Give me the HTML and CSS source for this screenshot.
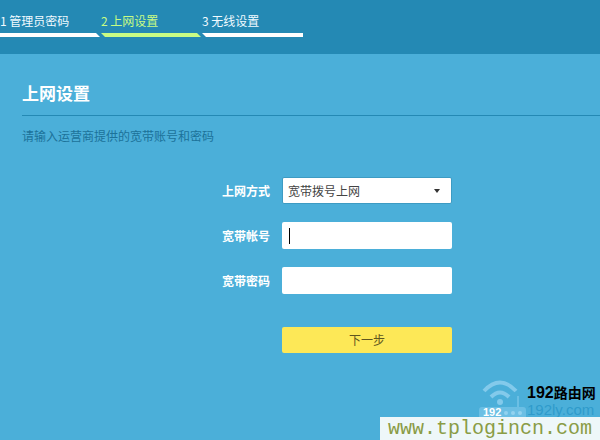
FILE: index.html
```html
<!DOCTYPE html>
<html lang="zh-CN">
<head>
    <meta charset="UTF-8">
    <meta name="viewport" content="width=device-width, initial-scale=1.0">
    <title>上网设置</title>
    <link rel="stylesheet" href="styles.css">
</head>
<body>
    <header class="header">
        <ol class="steps">
            <li class="step">1 管理员密码</li>
            <li class="step active">2 上网设置</li>
            <li class="step last">3 无线设置</li>
        </ol>
    </header>

    <main class="content">
        <h1 class="title">上网设置</h1>
        <p class="tip">请输入运营商提供的宽带账号和密码</p>

        <form class="wan-form">
            <label for="wanType">上网方式</label>
            <select id="wanType" class="field select">
                <option>宽带拨号上网</option>
                <option>自动获得IP地址</option>
                <option>固定IP地址</option>
            </select>

            <label for="account">宽带帐号</label>
            <input type="text" id="account" class="field" autocomplete="off" autofocus>

            <label for="password">宽带密码</label>
            <input type="password" id="password" class="field">

            <button type="button" class="next">下一步</button>
        </form>
    </main>

    <div class="watermark">
        <div class="brand">
            <svg class="router" width="48" height="38" viewBox="0 0 48 38">
                <g fill="none" stroke="#83caeb" stroke-width="4">
                    <path d="M5 12 Q21 -5 37 12"/>
                    <path d="M12 18 Q21 9 30 18"/>
                </g>
                <circle cx="21" cy="23" r="3" fill="#83caeb"/>
                <rect x="38" y="17" width="2" height="12" fill="#6bbfe4"/>
                <rect x="0" y="28" width="47" height="14" rx="3" fill="#6bbfe4"/>
                <g fill="#92d2ef">
                    <circle cx="27" cy="34" r="2"/>
                    <circle cx="34" cy="34" r="2"/>
                    <circle cx="41" cy="34" r="2"/>
                </g>
                <text x="4" y="37" class="router-text">192</text>
            </svg>
            <div class="brand-text">
                <div class="brand-name">192<span>路由网</span></div>
                <div class="brand-site">192ly.com</div>
            </div>
        </div>
        <div class="url">www.tplogincn.com</div>
    </div>
</body>
</html>
```

FILE: styles.css
```css
* {
    margin: 0;
    padding: 0;
    box-sizing: border-box;
}

body {
    font-family: 'Noto Sans CJK SC', sans-serif;
    font-size: 12px;
    line-height: 18px;
    background: #4bafd9;
    min-height: 100vh;
    position: relative;
    overflow: hidden;
}

.header {
    background: #2489b4;
    padding: 12px 0 17px;
}

.steps {
    display: flex;
    list-style: none;
}

.step {
    width: 101px;
    color: #f0faff;
}

.step::after {
    content: '';
    display: block;
    height: 4px;
    margin-top: 3px;
    background: #fff;
    clip-path: polygon(0 0, calc(100% - 5px) 0, calc(100% - 1px) 100%, 4px 100%);
}

.step:first-child::after {
    clip-path: polygon(0 0, calc(100% - 5px) 0, calc(100% - 1px) 100%, 0 100%);
}

.step.active {
    color: #c8fc84;
}

.step.active::after {
    background: #c8fc84;
}

.step.last::after {
    clip-path: polygon(0 0, 100% 0, 100% 100%, 4px 100%);
}

.content {
    padding: 26px 0 0 22px;
}

.title {
    color: #fff;
    font-size: 17px;
    line-height: 26px;
    padding-bottom: 9px;
    border-bottom: 1px solid #2489b4;
}

.tip {
    margin-top: 11px;
    color: #1c7299;
}

.wan-form {
    display: grid;
    grid-template-columns: 48px 170px;
    column-gap: 12px;
    row-gap: 18px;
    align-items: center;
    margin: 32px 0 0 200px;
}

.wan-form label {
    color: #fff;
    font-weight: bold;
}

.field {
    width: 100%;
    height: 27px;
    padding: 0 6px;
    border: none;
    border-radius: 2px;
    background: #fff;
    color: #444;
    font: inherit;
    outline: none;
}

.select {
    appearance: none;
    border: 1px solid #3d9bc3;
    padding: 0 5px;
    background: #fff url("data:image/svg+xml,%3Csvg xmlns='http://www.w3.org/2000/svg' width='6' height='4'%3E%3Cpath d='M0 0h6L3 4z' fill='%23333'/%3E%3C/svg%3E") no-repeat right 11px center;
}

#account:focus {
    caret-color: transparent;
    background: linear-gradient(#000, #000) 7px center / 1px 16px no-repeat #fff;
}

.next {
    grid-column: 2;
    height: 26px;
    margin-top: 15px;
    border: none;
    border-radius: 2px;
    background: #fde857;
    color: #5f5620;
    font: inherit;
    cursor: pointer;
}

.watermark {
    position: absolute;
    right: 0;
    bottom: 0;
    width: 220px;
}

.brand {
    display: flex;
    justify-content: flex-end;
    height: 38px;
    padding-right: 5px;
}

.router-text {
    font: bold 11px/11px 'Liberation Sans', sans-serif;
    fill: #fff;
}

.brand-text {
    width: 68px;
    padding-top: 4px;
    font-family: 'Liberation Sans', 'Noto Sans CJK SC', sans-serif;
    white-space: nowrap;
}

.brand-name {
    color: #000;
    font-size: 16px;
    font-weight: bold;
    line-height: 20px;
}

.brand-name span {
    font-size: 14px;
}

.brand-site {
    color: #2f9bcb;
    font-size: 15px;
    line-height: 14px;
}

.url {
    position: relative;
    background: #eef7f9;
    color: #8a9c46;
    font-family: 'Liberation Mono', monospace;
    font-size: 20px;
    line-height: 23px;
    text-align: center;
}
```
